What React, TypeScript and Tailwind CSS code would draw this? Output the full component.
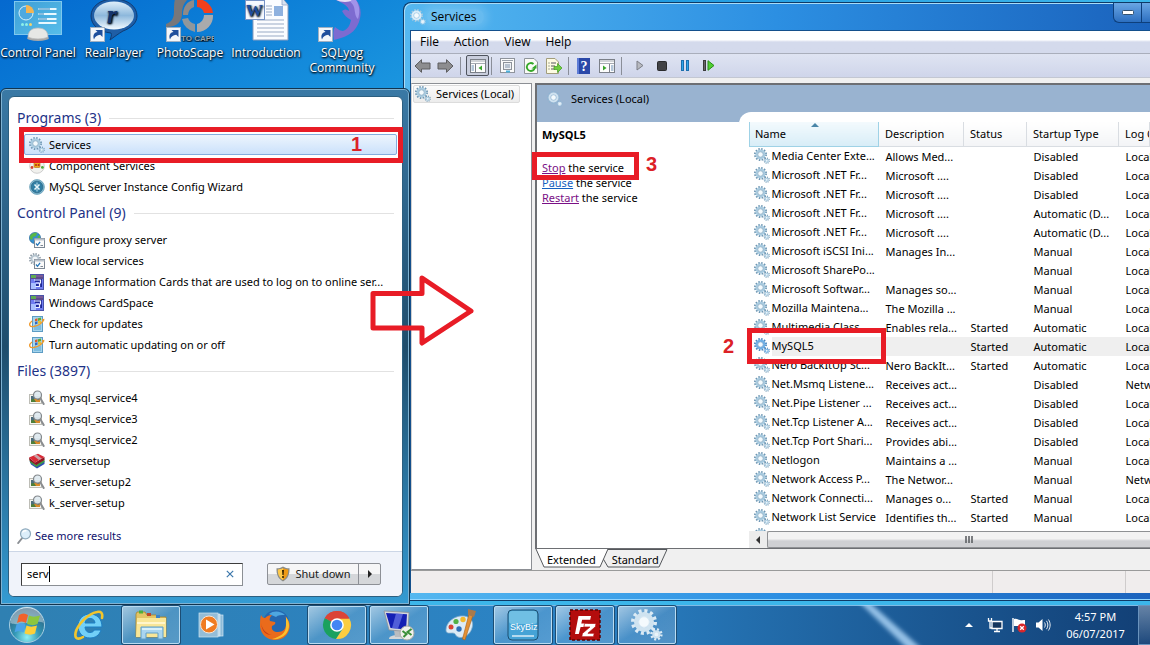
import type { ReactNode } from "react";

/* ---------- small icons ---------- */

type GearProps = { className?: string; body?: string; rim?: string };

function Gears({ className = "size-4", body = "#a9cbe0", rim = "#6f97b3" }: GearProps) {
  return (
    <svg viewBox="0 0 16 16" className={`${className} shrink-0`} aria-hidden="true">
      <circle cx="6.5" cy="6.5" r="5.5" fill="none" stroke={rim} strokeWidth="2" strokeDasharray="1.5 1.38" />
      <circle cx="6.5" cy="6.5" r="3.9" fill="none" stroke={body} strokeWidth="2.200" />
      <circle cx="6.5" cy="6.5" r="2.7" fill="#f4fafd" stroke={rim} strokeWidth="0.600" />
      <circle cx="12.7" cy="12.7" r="2.5" fill="none" stroke={rim} strokeWidth="1.200" strokeDasharray="1 0.96" />
      <circle cx="12.7" cy="12.7" r="1.5" fill="#eaf4fa" stroke={body} strokeWidth="1.100" />
    </svg>
  );
}

function ComponentIcon() {
  return (
    <svg viewBox="0 0 16 16" className="size-4 shrink-0" aria-hidden="true">
      <circle cx="8" cy="8" r="7.3" fill="#f1f1ee" stroke="#c4c4c4" strokeWidth="0.8" />
      <rect x="5" y="4.5" width="6" height="5" rx="1" fill="#f0a818" stroke="#b06a10" strokeWidth="0.6" />
      <circle cx="7" cy="7" r="1" fill="#b52318" />
      <circle cx="9.6" cy="7" r="1" fill="#b52318" />
      <circle cx="3" cy="9.5" r="1.4" fill="#d6402c" />
      <circle cx="13.4" cy="9.4" r="1.4" fill="#4ca83a" />
    </svg>
  );
}

function WizardIcon() {
  return (
    <svg viewBox="0 0 16 16" className="size-4 shrink-0" aria-hidden="true">
      <circle cx="8" cy="8" r="7.4" fill="#7fb6cf" stroke="#6a9fb8" strokeWidth="0.8" />
      <circle cx="8" cy="8" r="5.8" fill="#2f7da3" stroke="#2b6684" strokeWidth="0.7" />
      <path d="M5.5 5.500l5 5M10.500 5.500l-5 5" stroke="#e6f5fb" strokeWidth="1.600" />
      <path d="M8 3.500v3M8 9.500v3" stroke="#bfe2ef" strokeWidth="1" />
    </svg>
  );
}

function ChecklistOverlay() {
  return (
    <>
      <rect x="5.5" y="6.5" width="10" height="9" fill="#fafafa" stroke="#7c8794" />
      <rect x="5.5" y="6.5" width="10" height="2" fill="#b9c2cc" />
      <path d="M7 11.5l1.5 1.8 2.6-3.4" fill="none" stroke="#2475b8" strokeWidth="1.3" />
      <path d="M11.5 13.5h2.5" stroke="#7c8794" />
    </>
  );
}

function ProxyIcon() {
  return (
    <svg viewBox="0 0 16 16" className="size-4 shrink-0" aria-hidden="true">
      <circle cx="6" cy="6" r="5.6" fill="#3490cf" stroke="#1c5f94" strokeWidth="0.6" />
      <path d="M1 4c2-3 5-3.500 7-3l-1 3-3 1-1 3-2-1zM8 5l3-2v4z" fill="#58b847" />
      <ChecklistOverlay />
    </svg>
  );
}

function LocalServicesIcon() {
  return (
    <svg viewBox="0 0 16 16" className="size-4 shrink-0" aria-hidden="true">
      <circle cx="6" cy="6" r="5" fill="none" stroke="#8f9ba6" strokeWidth="2" strokeDasharray="1.4 1.2" />
      <circle cx="6" cy="6" r="3.500" fill="#f2f6f9" stroke="#b5c4cf" strokeWidth="1.8" />
      <ChecklistOverlay />
    </svg>
  );
}

function CardIcon() {
  return (
    <svg viewBox="0 0 16 16" className="size-4 shrink-0" aria-hidden="true">
      <rect x="1.5" y="0.500" width="13" height="15" fill="#6f7cf0" stroke="#4a53a8" />
      <rect x="2" y="1" width="12" height="4" fill="#5d4c8c" />
      <rect x="2" y="1" width="5" height="3" fill="#5faa54" />
      <rect x="7" y="1" width="7" height="2" fill="#7a5a98" />
      <rect x="2" y="9" width="5" height="6" fill="#a9c0ff" />
      <path d="M6 6.500h5.500v5H7" fill="none" stroke="#1d2899" strokeWidth="3" />
      <path d="M5 6h6.500v3H7M10.500 9.500v3H6.500" fill="none" stroke="#eef0ff" strokeWidth="1.200" />
    </svg>
  );
}

function UpdateIcon() {
  return (
    <svg viewBox="0 0 16 16" className="size-4 shrink-0" aria-hidden="true">
      <rect x="3.500" y="0.500" width="10" height="15" fill="#a6d4ec" stroke="#5d9cc4" />
      <rect x="5" y="9" width="7" height="5" fill="#7dbde0" />
      <path d="M6 3l2.500-.8v2.500L6 5.500z" fill="#dd5a2a" />
      <path d="M9 2.200l3-.6v2.500l-3 .8z" fill="#5aad3c" />
      <path d="M6 6l2.500-.7v2.500L6 8.400z" fill="#3068c0" />
      <path d="M9 5.300l3-.7v2.500l-3 .6z" fill="#e8c22e" />
      <path d="M3 5C-.8 8 .3 11.500 5 10.500c4-.8 8-3.500 9.500-6.500" fill="none" stroke="#f09a2c" strokeWidth="1.300" />
      <path d="M12.500 3.300l3-.6-.6 3z" fill="#f09a2c" />
    </svg>
  );
}

function PictureFileIcon() {
  return (
    <svg viewBox="0 0 16 16" className="size-4 shrink-0" aria-hidden="true">
      <rect x="0.500" y="4.500" width="12" height="9" fill="#f6f4ee" stroke="#bdbdb6" />
      <rect x="2" y="6" width="9" height="6" fill="#4c6d7d" />
      <path d="M5 12v-3l2-1 2 2 2-1v3z" fill="#d98a2a" />
      <path d="M2 12v-2.500l3-.5 2 3z" fill="#4e7f38" />
      <circle cx="8.500" cy="5" r="4" fill="#dfeaf0" fillOpacity="0.950" stroke="#83888c" strokeWidth="1.200" />
      <path d="M11.500 8.500l3.200 5.500" stroke="#8a8d90" strokeWidth="2" strokeLinecap="round" />
    </svg>
  );
}

function ArchiveIcon() {
  return (
    <svg viewBox="0 0 16 16" className="size-4 shrink-0" aria-hidden="true">
      <path d="M.5 8l6 5 9-5v3L8 15.500 2 11.500z" fill="#2f4fb5" />
      <path d="M.5 6l6 5.500 9-5v2.500L7.500 14 1 9.500z" fill="#3c9a48" />
      <path d="M0 4.500L6 9.500 15.500 4v3L7 12 .5 7.500z" fill="#8e1522" />
      <path d="M0 4.500L9 .8l6.500 3.200L6 9.500z" fill="#d92b37" />
      <path d="M4.500 2.700l5.500 4.300 2.500-1.400L7.500 1.500z" fill="#c9a3a8" />
    </svg>
  );
}

function SearchIcon() {
  return (
    <svg viewBox="0 0 16 16" className="size-4 shrink-0" aria-hidden="true">
      <path d="M1.200 15l4-5" stroke="#8b8f94" strokeWidth="2" strokeLinecap="round" />
      <circle cx="8.500" cy="5.800" r="5" fill="#dceefa" stroke="#8ea9bc" strokeWidth="1.200" />
      <path d="M5.500 4.500c.8-1.500 2.500-2 4-1.600" fill="none" stroke="#fff" strokeWidth="1.300" />
    </svg>
  );
}

function ShieldIcon() {
  return (
    <svg viewBox="0 0 16 16" className="size-4 shrink-0" aria-hidden="true">
      <path d="M8 .5c2 1.400 4 1.800 6.500 1.800.3 6-1.500 10.500-6.500 13.200C3 12.800 1.200 8.300 1.500 2.300 4 2.300 6 1.900 8 .5z" fill="#8c8c86" />
      <path d="M8 2c1.600 1 3.300 1.300 5.200 1.400.1 5-1.400 8.300-5.200 10.600z" fill="#ee9a16" />
      <path d="M8 2C6.400 3 4.700 3.300 2.800 3.400c-.1 5 1.400 8.300 5.200 10.600z" fill="#ffc94a" />
      <path d="M7 4h2l-.4 5H7.400z" fill="#3a2600" />
      <circle cx="8" cy="11" r="1.100" fill="#3a2600" />
    </svg>
  );
}

/* ---------- desktop shortcuts ---------- */

function ShortcutBadge() {
  return (
    <>
      <rect x="0.500" y="27.500" width="14" height="14" fill="#f3f6fa" stroke="#9fb0c2" />
      <path d="M4 39.500c-1.500-4 0-7 3.500-7.500L5.500 30h7v7l-2.300-2.300C7 35 5 36.500 4 39.500z" fill="#1f4f9c" />
    </>
  );
}

function ControlPanelArt() {
  return (
    <svg viewBox="0 0 48 42" className="h-[42px] w-12" aria-hidden="true">
      <defs>
        <linearGradient id="cp" x1="0" y1="0" x2="1" y2="1">
          <stop offset="0" stopColor="#3f9fd6" />
          <stop offset="1" stopColor="#56bdea" />
        </linearGradient>
      </defs>
      <rect x="0.500" y="1.500" width="47" height="33" fill="url(#cp)" stroke="#7fc8ee" />
      <circle cx="12" cy="13" r="7" fill="#4fa9e0" stroke="#d9f0fb" strokeWidth="1" />
      <path d="M12 13V5a8 8 0 0 1 8 8z" fill="#f4b553" />
      <path d="M24.500 9h18M24.500 14h18M24.500 19h18M24.500 23h18" stroke="#e8f8ff" strokeWidth="2" />
      <path d="M25 9h11M25 14h5M25 19h8" stroke="#2b82bd" strokeWidth="1" />
      <circle cx="8.500" cy="24.500" r="1.500" fill="#8df0e8" />
      <circle cx="12.500" cy="24.500" r="1.500" fill="#8df0e8" />
      <circle cx="16.500" cy="24.500" r="1.500" fill="#f5d36a" />
      <ellipse cx="24" cy="38" rx="11" ry="3" fill="#a8a8a8" />
      <path d="M14 37c0-6 4-9 10-9s10 3 10 9c-5 2.500-15 2.500-20 0z" fill="#e7e7e5" stroke="#b9b9b9" strokeWidth="0.700" />
    </svg>
  );
}

function RealPlayerArt() {
  return (
    <svg viewBox="0 0 48 42" className="h-[42px] w-12" aria-hidden="true">
      <defs>
        <linearGradient id="rp" x1="0" y1="0" x2="0" y2="1">
          <stop offset="0" stopColor="#dfeffa" />
          <stop offset="0.500" stopColor="#8db8dc" />
          <stop offset="1" stopColor="#f4fbff" />
        </linearGradient>
      </defs>
      <path d="M24-1C37-1 47 6 47 16c0 7-6 12-14 15-5 3-9 6-13 9 1-3 2-5 1-7C9 32 1 25 1 16 1 6 11-1 24-1z" fill="#1f5ea6" stroke="#103c74" strokeWidth="1" />
      <ellipse cx="24" cy="15.500" rx="20" ry="14" fill="url(#rp)" />
      <text x="17" y="23" fontFamily="Liberation Serif, serif" fontWeight="700" fontStyle="italic" fontSize="26" fill="#14346c">r</text>
      <ShortcutBadge />
    </svg>
  );
}

function PhotoScapeArt() {
  return (
    <svg viewBox="0 0 48 42" className="h-[42px] w-12" aria-hidden="true">
      <path d="M9-1h13c-4 4-6 8-6 14 0 8-4 14-16 14v-3c5-2 8-5 8-12 0-5 0-9 1-13z" fill="#77777a" />
      <path d="M31-1a16 16 0 0 1 16 14H38a8 8 0 0 0-7-6z" fill="#f3401c" />
      <path d="M47 15a16 16 0 0 1-16 17v-8a9 9 0 0 0 7-9z" fill="#a9aaac" />
      <path d="M29 32a16 16 0 0 1-13-13l6-1a9 9 0 0 0 7 6z" fill="#8f979c" />
      <path d="M28 0v7a9 9 0 0 0-6 8h-5C17 7 21 1 28 0z" fill="#8f8a88" />
      <text x="15" y="41" fontFamily="Liberation Sans, sans-serif" fontSize="8" fontWeight="700" fill="#93a3b0">TO CAPE</text>
      <ShortcutBadge />
    </svg>
  );
}

function WordDocArt() {
  return (
    <svg viewBox="0 0 48 42" className="h-[42px] w-12" aria-hidden="true">
      <path d="M11-1h30l5 6v35H11z" fill="#fbfcff" stroke="#8a9cbd" />
      <path d="M40-1v6h6" fill="#d9e2f1" stroke="#8a9cbd" strokeWidth="0.700" />
      <path d="M24 6h6M24 9h6M24 12h6M24 15h6M15 20h27M15 24h27M15 28h27M15 32h27M15 36h27" stroke="#9aaac6" strokeWidth="1.200" />
      <rect x="32" y="6" width="9" height="10" fill="#8fb1df" />
      <rect x="3.500" y="0.500" width="19" height="19" fill="#f6f9ff" stroke="#7793c6" />
      <text x="4" y="16" fontFamily="Liberation Serif, serif" fontSize="17" fontWeight="700" fill="#1f4d9e">W</text>
    </svg>
  );
}

function SqlyogArt() {
  return (
    <svg viewBox="0 0 48 42" className="h-[42px] w-12" aria-hidden="true">
      <path d="M16-1h21c6 6 7 14 4 23-3 8-8 12-15 15-3 1-6 2-10 3-1-6-1-9 1-13 4 3 6 4 8 4 5-2 7-6 8-11-4-2-7-5-9-9 2-2 4-2 7 0 0-5-7-8-15-12z" fill="#7d6bd0" />
      <path d="M31 0h7c4 6 4 13 2 19-3-2-3-8-4-12-1-3-3-4-5-7z" fill="#a293ea" />
      <path d="M17-1h17c0 2-3 3-7 3s-8-1-10-3z" fill="#e8dff5" />
      <ShortcutBadge />
    </svg>
  );
}

const shortcuts: { label: string; art: ReactNode }[] = [
  { label: "Control Panel", art: <ControlPanelArt /> },
  { label: "RealPlayer", art: <RealPlayerArt /> },
  { label: "PhotoScape", art: <PhotoScapeArt /> },
  { label: "Introduction", art: <WordDocArt /> },
  { label: "SQLyog Community", art: <SqlyogArt /> },
];

function Desktop() {
  return (
    <div className="flex items-start text-[12px] [font-family:'Open_Sans','Noto_Sans',sans-serif]">
      {shortcuts.map((s) => (
        <a
          key={s.label}
          href="#"
          className="flex w-[76px] flex-col items-center gap-[3px] text-center leading-[15px] text-white [text-shadow:0_1px_2px_#000,1px_1px_2px_#001a33]"
        >
          {s.art}
          <span>{s.label}</span>
        </a>
      ))}
    </div>
  );
}

/* ---------- start menu ---------- */

const groups: { title: string; items: { label: string; icon: ReactNode; active?: boolean }[] }[] = [
  {
    title: "Programs (3)",
    items: [
      { label: "Services", icon: <Gears />, active: true },
      { label: "Component Services", icon: <ComponentIcon /> },
      { label: "MySQL Server Instance Config Wizard", icon: <WizardIcon /> },
    ],
  },
  {
    title: "Control Panel (9)",
    items: [
      { label: "Configure proxy server", icon: <ProxyIcon /> },
      { label: "View local services", icon: <LocalServicesIcon /> },
      { label: "Manage Information Cards that are used to log on to online ser...", icon: <CardIcon /> },
      { label: "Windows CardSpace", icon: <CardIcon /> },
      { label: "Check for updates", icon: <UpdateIcon /> },
      { label: "Turn automatic updating on or off", icon: <UpdateIcon /> },
    ],
  },
  {
    title: "Files (3897)",
    items: [
      { label: "k_mysql_service4", icon: <PictureFileIcon /> },
      { label: "k_mysql_service3", icon: <PictureFileIcon /> },
      { label: "k_mysql_service2", icon: <PictureFileIcon /> },
      { label: "serversetup", icon: <ArchiveIcon /> },
      { label: "k_server-setup2", icon: <PictureFileIcon /> },
      { label: "k_server-setup", icon: <PictureFileIcon /> },
    ],
  },
];

function StartMenu() {
  return (
    <section
      aria-label="Start menu"
      className="absolute top-[88px] bottom-0 left-0 flex w-[410px] flex-col rounded-t-md border border-[#12344e] bg-linear-to-b from-[#3a79a5] via-[#1f4d6c] to-[#349bd3] py-[7px] pr-[6px] pl-[7px] shadow-[inset_0_0_0_1px_#7fb2d2]"
    >
      <div className="flex flex-1 flex-col overflow-hidden rounded-md border border-[#2c5f80] bg-white">
        <div className="flex-1 px-2 pt-[5px]">
          {groups.map((g) => (
            <div key={g.title}>
              <h2 className="flex h-8 items-center gap-2 text-[14px] whitespace-nowrap text-[#1e3287]">
                {g.title}
                <span className="h-px flex-1 bg-[#e2e2e2]" />
              </h2>
              <ul className="-mr-[3px] pl-[7px]">
                {g.items.map((it) => (
                  <li key={it.label}>
                    <button
                      type="button"
                      className={
                        it.active
                          ? "flex h-[21px] w-full items-center gap-1 rounded-xs border border-[#84acdd] bg-linear-to-b from-[#edf5fd] to-[#cbe1fb] pl-1 whitespace-nowrap"
                          : "flex h-[21px] w-full items-center gap-1 border border-transparent pl-1 whitespace-nowrap"
                      }
                    >
                      {it.icon}
                      {it.label}
                    </button>
                  </li>
                ))}
              </ul>
            </div>
          ))}
          <a href="#" className="mt-[13px] flex h-5 items-center gap-[2px] text-[#10126e]">
            <SearchIcon />
            See more results
          </a>
        </div>
        <div className="flex h-[45px] items-center justify-between border-t border-[#ccd6e6] bg-[#f0f3fa] pr-[21px] pl-3">
          <label className="flex h-[23px] w-[222px] items-center border border-[#8b8f94] border-t-[#3c3c3c] border-l-[#3c3c3c] bg-white px-[5px]">
            <span className="sr-only">Search programs and files</span>
            <span className="flex min-w-0 flex-1 items-center">
              <input type="text" defaultValue="serv" className="w-[23px] min-w-0 border-r border-black outline-none" />
            </span>
            <svg viewBox="0 0 8 8" className="mr-[3px] size-2" aria-hidden="true">
              <path d="M.8.8l6.400 6.400M7.200.8L.8 7.200" stroke="#3c78ac" strokeWidth="1.200" />
            </svg>
          </label>
          <div className="flex h-[22px] rounded-xs border border-[#8d9096] bg-linear-to-b from-[#f6f6f7] from-50% to-[#d5d7da] to-50% text-[#1a1a1a]">
            <button type="button" className="flex w-[91px] items-center justify-center gap-1 border-r border-[#8d9096] whitespace-nowrap">
              <ShieldIcon />
              Shut down
            </button>
            <button type="button" aria-label="Shutdown options" className="flex w-[21px] items-center justify-center">
              <svg viewBox="0 0 4 8" className="h-2 w-1" aria-hidden="true">
                <path d="M0 0l4 4-4 4z" fill="#222" />
              </svg>
            </button>
          </div>
        </div>
      </div>
    </section>
  );
}

/* ---------- services window ---------- */

function ToolSep() {
  return <span className="h-[18px] w-px bg-[#8a8e98]" />;
}

function PaneIcon({ flip = false }: { flip?: boolean }) {
  return (
    <svg viewBox="0 0 16 14" className="h-[14px] w-4" aria-hidden="true">
      <rect x="0.500" y="0.500" width="15" height="13" fill="#fdfdfd" stroke="#7b8088" />
      <path d="M1 2h14M1 4.500h14" stroke="#a6abb3" strokeWidth="1.200" />
      <path d={flip ? "M10.500 5v8" : "M5.500 5v8"} stroke="#7b8088" />
      <path d={flip ? "M12 7h2.500M12 9h2.500M12 11h2.500" : "M1.500 7H4M1.500 9H4M1.500 11H4"} stroke="#6a8fb5" />
      <path d={flip ? "M4 6.500v5l3.500-2.500z" : "M12 6.500v5L8.500 9z"} fill="#39a52c" />
    </svg>
  );
}

function ArrowTool({ right = false }: { right?: boolean }) {
  return (
    <svg viewBox="0 0 17 14" className="h-[14px] w-[17px]" aria-hidden="true">
      <path
        d={right ? "M16 7L9.500 .7v3.300H1v6h8.500v3.300z" : "M1 7L7.500.7V4H16v6H7.500v3.300z"}
        fill="#8d8d8f"
        stroke="#5c5c5e"
        strokeWidth="1"
      />
    </svg>
  );
}

function Toolbar() {
  return (
    <div className="flex h-6 items-center border-b border-[#c3c7d2] bg-linear-to-b from-[#dfe4f2] to-[#cfd5ea] pl-[3px]">
      <div className="flex items-center gap-[6px]">
        <button type="button" aria-label="Back"><ArrowTool /></button>
        <button type="button" aria-label="Forward"><ArrowTool right /></button>
        <ToolSep />
      </div>
      <button type="button" aria-label="Show console tree" className="ml-[5px] flex h-[21px] w-[23px] items-center justify-center rounded-xs border border-[#4f545e] bg-[#c9cedd]">
        <PaneIcon />
      </button>
      <div className="ml-[2px] flex items-center gap-2">
        <ToolSep />
        <button type="button" aria-label="Properties">
          <svg viewBox="0 0 15 16" className="h-4 w-[15px]" aria-hidden="true">
            <rect x="0.500" y="0.500" width="14" height="14" fill="#fbfbfb" stroke="#8e939b" />
            <path d="M2 2.500h11" stroke="#9ba1aa" />
            <rect x="3.500" y="4.500" width="8" height="7" fill="#eef1f5" stroke="#8e939b" />
            <path d="M5 7h5M5 9h5" stroke="#8093aa" />
            <path d="M6 13.500h4" stroke="#4cb0dc" strokeWidth="2" />
          </svg>
        </button>
        <button type="button" aria-label="Refresh" className="ml-px">
          <svg viewBox="0 0 14 16" className="h-4 w-[14px]" aria-hidden="true">
            <path d="M.5.5H10l3.500 3.500v11.500H.5z" fill="#fbfbf6" stroke="#8f959b" />
            <path d="M10.800 9.500A4 4 0 1 1 9.500 6" fill="none" stroke="#35a82a" strokeWidth="1.800" />
            <path d="M7.500 10.500h5v-4z" fill="#35a82a" />
          </svg>
        </button>
        <button type="button" aria-label="Export list">
          <svg viewBox="0 0 16 16" className="size-4" aria-hidden="true">
            <path d="M.5.5H9L12.500 4v11.500H.5z" fill="#fdfbe2" stroke="#a29d7c" />
            <path d="M2.500 5h1M5 5h5M2.500 8h1M5 8h4M2.500 11h1M5 11h4" stroke="#55585c" strokeWidth="1.200" />
            <path d="M8 8.500h3.500V5.500L16 10l-4.500 4.500v-3H8z" fill="#6fce3e" stroke="#3f9a20" strokeWidth="0.700" />
          </svg>
        </button>
      </div>
      <div className="ml-[6px] flex items-center gap-2">
        <ToolSep />
        <button type="button" aria-label="Help">
          <svg viewBox="0 0 13 16" className="h-4 w-[13px]" aria-hidden="true">
            <rect width="13" height="16" fill="#2a48a8" />
            <path d="M0 0h2v16H0z" fill="#5d7bd6" />
            <text x="3.500" y="13" fontFamily="Liberation Serif, serif" fontWeight="700" fontSize="14" fill="#fff">?</text>
          </svg>
        </button>
        <button type="button" aria-label="Show action pane" className="ml-px"><PaneIcon flip /></button>
      </div>
      <div className="ml-[6px] flex items-center">
        <ToolSep />
        <button type="button" aria-label="Start service" className="ml-[14px]">
          <svg viewBox="0 0 8 11" className="h-[11px] w-2" aria-hidden="true">
            <path d="M1 1l6 4.500L1 10z" fill="#b8bac0" stroke="#7c7f86" />
          </svg>
        </button>
        <button type="button" aria-label="Stop service" className="ml-[13px]">
          <svg viewBox="0 0 10 10" className="size-[10px]" aria-hidden="true">
            <rect x="0.500" y="0.500" width="9" height="9" rx="1" fill="#414245" stroke="#2a2b2d" />
          </svg>
        </button>
        <button type="button" aria-label="Pause service" className="ml-[14px]">
          <svg viewBox="0 0 8 11" className="h-[11px] w-2" aria-hidden="true">
            <rect x="0.500" y="0.500" width="2" height="10" fill="#2fa5e8" stroke="#1b6fae" />
            <rect x="5.500" y="0.500" width="2" height="10" fill="#2fa5e8" stroke="#1b6fae" />
          </svg>
        </button>
        <button type="button" aria-label="Restart service" className="ml-[14px]">
          <svg viewBox="0 0 12 11" className="h-[11px] w-3" aria-hidden="true">
            <rect x="0.500" y="0.500" width="2" height="10" fill="#666" stroke="#3b3b3b" />
            <path d="M5 .7l6 4.800-6 4.800z" fill="#4fd030" stroke="#288b18" />
          </svg>
        </button>
      </div>
    </div>
  );
}

const services: [string, string, string, string, string][] = [
  ["Media Center Exte...", "Allows Med...", "", "Disabled", "Local Service"],
  ["Microsoft .NET Fr...", "Microsoft ....", "", "Disabled", "Local System"],
  ["Microsoft .NET Fr...", "Microsoft ....", "", "Disabled", "Local System"],
  ["Microsoft .NET Fr...", "Microsoft ....", "", "Automatic (D...", "Local System"],
  ["Microsoft .NET Fr...", "Microsoft ....", "", "Automatic (D...", "Local System"],
  ["Microsoft iSCSI Ini...", "Manages In...", "", "Manual", "Local System"],
  ["Microsoft SharePo...", "", "", "Manual", "Local System"],
  ["Microsoft Softwar...", "Manages so...", "", "Manual", "Local System"],
  ["Mozilla Maintena...", "The Mozilla ...", "", "Manual", "Local System"],
  ["Multimedia Class ...", "Enables rela...", "Started", "Automatic", "Local System"],
  ["MySQL5", "", "Started", "Automatic", "Local System"],
  ["Nero BackItUp Sc...", "Nero BackIt...", "Started", "Automatic", "Local System"],
  ["Net.Msmq Listene...", "Receives act...", "", "Disabled", "Network Service"],
  ["Net.Pipe Listener ...", "Receives act...", "", "Disabled", "Local Service"],
  ["Net.Tcp Listener A...", "Receives act...", "", "Disabled", "Local Service"],
  ["Net.Tcp Port Shari...", "Provides abi...", "", "Disabled", "Local Service"],
  ["Netlogon", "Maintains a ...", "", "Manual", "Local System"],
  ["Network Access P...", "The Networ...", "", "Manual", "Network Service"],
  ["Network Connecti...", "Manages o...", "Started", "Manual", "Local System"],
  ["Network List Service", "Identifies th...", "Started", "Manual", "Local Service"],
  ["Network Location ...", "Collects an...", "Started", "Automatic", "Network Service"],
];

function ServiceTable() {
  return (
    <table className="w-full table-fixed border-collapse text-left whitespace-nowrap">
      <colgroup>
        <col className="w-[129px]" />
        <col className="w-[85px]" />
        <col className="w-[63px]" />
        <col className="w-[92px]" />
        <col />
      </colgroup>
      <thead>
        <tr className="h-6">
          <th className="relative border-x border-b border-[#9fd2e6] bg-linear-to-b from-[#f3fafd] to-[#d8edf7] pl-[5px] font-normal">
            <svg viewBox="0 0 8 4" className="absolute top-px left-[61px] h-1 w-2" aria-hidden="true">
              <path d="M0 4l4-4 4 4z" fill="#4a86a8" />
            </svg>
            Name
          </th>
          {["Description", "Status", "Startup Type", "Log On As"].map((h) => (
            <th key={h} className="overflow-hidden border-r border-b border-[#d9dde2] bg-linear-to-b from-white to-[#f3f4f6] pl-[6px] font-normal">
              {h}
            </th>
          ))}
        </tr>
      </thead>
      <tbody>
        {services.map((row, i) => {
          const selected = row[0] === "MySQL5";
          return (
            <tr key={i} className={selected ? "h-[19px] bg-[#efefef]" : "h-[19px]"}>
              {row.map((cell, c) =>
                c === 0 ? (
                  <td key={c} className="overflow-hidden p-0">
                    <div className="flex h-[19px] items-center">
                      <span className="flex h-full w-[22px] shrink-0 items-center bg-white pl-1">
                        <Gears body={selected ? "#6fb0e6" : "#a9cbe0"} rim={selected ? "#4c86bd" : "#6f97b3"} />
                      </span>
                      {cell}
                    </div>
                  </td>
                ) : (
                  <td key={c} className="overflow-hidden py-0 pr-0 pl-[7px] leading-[19px]">{cell}</td>
                ),
              )}
            </tr>
          );
        })}
      </tbody>
    </table>
  );
}

function ServicesWindow() {
  return (
    <section
      aria-label="Services window"
      className="absolute top-[2px] right-0 bottom-1 left-[403px] flex flex-col rounded-tl-lg border border-r-0 border-[#0e3a66] bg-linear-to-r from-[#55b8f0] via-[#2c8fe2] to-[#1b63bd] pb-[7px] pl-[6px] shadow-[inset_1px_1px_0_#a8dcf8,inset_0_-1px_0_#8fd4ff]"
    >
      <header className="flex h-[27px] items-center justify-between text-[12px] [font-family:'Open_Sans','Noto_Sans',sans-serif]">
        <h1 className="flex items-center gap-px">
          <Gears body="#d9ecf8" rim="#a3c8e0" />
          <span className="rounded-full bg-white/15 pr-2 pl-1 shadow-[0_0_8px_4px_rgba(255,255,255,0.15)]">Services</span>
        </h1>
        <div className="flex h-5 self-start rounded-bl-md border border-t-0 border-r-0 border-[#0d3f7c] bg-linear-to-b from-[#6aa6e4] to-[#2c6fc0] text-white">
          <button type="button" aria-label="Minimize" className="flex w-7 items-center justify-center border-r border-[#0d3f7c]">
            <svg viewBox="0 0 12 5" className="h-[5px] w-3" aria-hidden="true">
              <rect x="0.500" y="0.500" width="11" height="4" rx="1" fill="#fff" stroke="#33516f" />
            </svg>
          </button>
          <button type="button" aria-label="Maximize" className="w-2" />
        </div>
      </header>

      <div className="flex min-h-0 flex-1 flex-col border-t border-l border-[#14508c] bg-[#f0f0f0]">
        <nav className="flex h-[23px] items-center border-b border-[#a9aebb] bg-linear-to-b from-white from-40% to-[#d4daec] to-50% pl-[9px] text-[12px] [font-family:'Open_Sans','Noto_Sans',sans-serif]">
          <div className="flex gap-[15px]">
            {["File", "Action", "View", "Help"].map((m) => (
              <button key={m} type="button">{m}</button>
            ))}
          </div>
        </nav>
        <Toolbar />

        <div className="mt-[5px] flex min-h-0 flex-1">
          <aside className="w-[121px] shrink-0 border border-[#8c8f94] border-l-[#d0d0d0] bg-white p-px">
            <a href="#" className="flex h-[18px] w-[107px] items-center gap-[5px] rounded-xs border border-[#dcdcdc] bg-linear-to-b from-[#fbfbfb] to-[#ececec] pl-px whitespace-nowrap">
              <Gears />
              Services (Local)
            </a>
          </aside>

          <div className="ml-[3px] flex min-w-0 flex-1 flex-col">
            <div className="flex min-h-0 flex-1 flex-col border-t-2 border-b border-l-2 border-[#6d6f73] bg-[#99b3d0]">
              <div className="flex h-[27px] shrink-0 items-center gap-2 pl-[10px]">
                <Gears body="#cfe2f0" rim="#8fb4d2" />
                Services (Local)
              </div>
              <div className="flex min-h-0 flex-1">
                <div className="mt-[10px] w-[202px] shrink-0 bg-white px-[5px] pt-[5px] leading-[15px]">
                  <h2 className="font-bold">MySQL5</h2>
                  <ul className="mt-[18px]">
                    <li><a href="#" className="text-[#7a0f86] underline">Stop</a> the service</li>
                    <li><a href="#" className="text-[#1560c0] underline">Pause</a> the service</li>
                    <li><a href="#" className="text-[#7a0f86] underline">Restart</a> the service</li>
                  </ul>
                </div>
                <div className="flex min-w-0 flex-1 flex-col rounded-tl-xl bg-white pt-[10px] pl-[10px]">
                  <div className="min-h-0 flex-1 overflow-hidden">
                    <ServiceTable />
                  </div>
                  <div className="flex h-[17px] shrink-0 bg-[#ececec]">
                    <button type="button" aria-label="Scroll left" className="flex w-[18px] items-center justify-center">
                      <svg viewBox="0 0 4 8" className="h-2 w-1" aria-hidden="true">
                        <path d="M4 0L0 4l4 4z" fill="#333" />
                      </svg>
                    </button>
                    <button type="button" aria-label="Horizontal scroll thumb" className="flex flex-1 items-center justify-center rounded-l-xs border border-r-0 border-[#8f9194] bg-linear-to-b from-[#f3f3f3] from-45% to-[#cfd0d3] to-60% pl-5">
                      <svg viewBox="0 0 8 7" className="h-[7px] w-2" aria-hidden="true">
                        <path d="M1 0v7M4 0v7M7 0v7" stroke="#55585c" strokeWidth="1.500" />
                      </svg>
                    </button>
                  </div>
                </div>
              </div>
            </div>
            <div className="relative flex h-[21px] shrink-0 items-center">
              <svg viewBox="0 0 140 20" className="absolute top-0 left-0 h-5 w-[140px]" aria-hidden="true">
                <path d="M72 .5l-4 9 5 8.500h51l8-17.500z" fill="#f0f0f0" stroke="#55585c" />
                <path d="M1 0l8 18h56l8-18z" fill="#fff" />
                <path d="M1 0l8 18h56l8-18" fill="none" stroke="#55585c" />
              </svg>
              <div className="relative flex gap-4 pl-3">
                <button type="button">Extended</button>
                <button type="button">Standard</button>
              </div>
            </div>
          </div>
        </div>

        <footer className="flex h-[23px] shrink-0 border-t border-[#9a9a9a] bg-[#f0eded]">
          <span className="flex-1 border-r border-[#cfcccc]" />
          <span className="w-[133px] border-r border-[#cfcccc]" />
          <span className="w-6" />
        </footer>
      </div>
    </section>
  );
}

/* ---------- taskbar ---------- */

function StartOrb() {
  return (
    <svg viewBox="0 0 38 38" className="size-[38px]" aria-hidden="true">
      <defs>
        <radialGradient id="orb" cx="0.500" cy="0.850" r="0.800">
          <stop offset="0" stopColor="#8ef0f4" />
          <stop offset="0.450" stopColor="#3296b4" />
          <stop offset="1" stopColor="#2c5c7c" />
        </radialGradient>
      </defs>
      <circle cx="19" cy="19" r="17.500" fill="url(#orb)" stroke="#a8cfe2" strokeWidth="1" />
      <path d="M2.500 17A16.500 16.500 0 0 1 35.500 17C28 13 10 21 2.500 17z" fill="#fff" fillOpacity="0.400" />
      <path d="M11 9c3-2 6-2 9 0l-2 8c-3-2-6-2-9 0z" fill="#f0622d" />
      <path d="M21 9.500c3 1.500 6 1.500 11 0l-2.500 8.500c-3 1.500-6 1.500-10.500 0z" fill="#8cc63e" />
      <path d="M8.500 18.500c3-2 6-2 9 0l-2 8c-3-2-6-2-9 0z" fill="#4aa3e8" />
      <path d="M18.500 19.500c3 1.500 6 1.500 10.500 0l-2 8c-3 1.500-6 1.500-10.500 0z" fill="#fccf3a" />
    </svg>
  );
}

function IeIcon() {
  return (
    <svg viewBox="0 0 34 34" className="size-[34px]" aria-hidden="true">
      <path d="M30 19H13c.2 3.500 2 5.500 5 5.500 2 0 3.500-.8 4.300-2.500H29c-1.500 5-5.500 8-11 8C11 30 6 25 6 18S11 6 18 6s12 5 12 13zM23 15c-.3-3-2-4.500-5-4.500S13.500 12 13 15z" fill="#72d0f8" stroke="#1d7fc4" strokeWidth="1" fillRule="evenodd" />
      <path d="M30 10c1-5-1-7-5-6C16 5.500 5 17 3.500 25 2.500 31 6 32 11 29" fill="none" stroke="#f3c52c" strokeWidth="2.600" strokeLinecap="round" />
    </svg>
  );
}

function ExplorerIcon() {
  return (
    <svg viewBox="0 0 34 32" className="h-8 w-[34px]" aria-hidden="true">
      <path d="M3 3h8l2 3h9l2 2h8v20H2V5z" fill="#e3c566" stroke="#a98728" strokeWidth="0.800" />
      <rect x="5" y="1.500" width="4" height="3" fill="#4eae3c" />
      <rect x="13" y="4" width="4" height="3" fill="#c0452c" />
      <rect x="22" y="6" width="4" height="3" fill="#3c83c8" />
      <path d="M3 9h29v19H2z" fill="#f8e698" />
      <path d="M3 14h28" stroke="#fff6cc" strokeWidth="2" />
      <path d="M7 30V18h22v12h-5v-6H12v6z" fill="#a9d5ef" stroke="#5f9fc8" strokeWidth="1" />
      <path d="M8 20h20" stroke="#e8f8ff" strokeWidth="1.500" />
    </svg>
  );
}

function MediaIcon() {
  return (
    <svg viewBox="0 0 30 26" className="h-[26px] w-[30px]" aria-hidden="true">
      <rect x="8" y="3" width="17" height="21" fill="#b7d4e6" fillOpacity="0.700" stroke="#d5e9f5" strokeWidth="0.700" />
      <rect x="5" y="2" width="17" height="22" fill="#bcd8e9" stroke="#dcedf7" strokeWidth="0.700" />
      <rect x="1" y="1" width="19" height="24" fill="#93bdd8" stroke="#cfe4f0" strokeWidth="0.700" />
      <circle cx="11" cy="12.500" r="8.500" fill="#f07c22" stroke="#f8e6d6" strokeWidth="1" />
      <path d="M8 7.500l8.500 5L8 17.500z" fill="#fff" />
    </svg>
  );
}

function FirefoxIcon() {
  return (
    <svg viewBox="0 0 32 32" className="size-8" aria-hidden="true">
      <circle cx="17" cy="14" r="13" fill="#2467b0" />
      <path d="M10 5c5-4 12-3 16 1-4 0-7 0-9 2z" fill="#4ea6e0" />
      <path d="M2 6c1 2 2 3 4 3 2-2 4-3 7-3-2 2-3 4-2 6l5 1c1 1 0 3-3 4-1 4 2 6 6 6 5 0 8-3 8-8 2-2 0-6-1-8 4 4 6 9 4 14-2 7-8 10-14 10C8 31 2 25 1 18 1 13 1 9 2 6z" fill="#ea6b1c" />
      <path d="M27 8c4 5 4 12 0 17-4 4-9 6-14 5 8-2 14-6 14-13z" fill="#fbc02e" />
      <path d="M2 14c1 6 5 11 11 12-7 0-10-4-11-12z" fill="#c53b18" />
    </svg>
  );
}

function ChromeIcon() {
  return (
    <svg viewBox="0 0 32 32" className="size-[30px]" aria-hidden="true">
      <path d="M16 16L3 8.500a15 15 0 0 1 26 0z" fill="#db4437" />
      <path d="M16 16L3 8.500a15 15 0 0 0 12 22.400L22 19.500z" fill="#1aa15f" />
      <path d="M16 9h13.200A15 15 0 0 1 15 31l7.500-11.500z" fill="#fccd40" />
      <path d="M16 16L3 8.500 16 9h13.200a15 15 0 0 0-26-.7z" fill="#db4437" />
      <circle cx="16" cy="16" r="7.300" fill="#fff" />
      <circle cx="16" cy="16" r="5.700" fill="#4285f4" />
    </svg>
  );
}

function RemoteIcon() {
  return (
    <svg viewBox="0 0 32 32" className="size-8" aria-hidden="true">
      <path d="M6 30c0-3 4-4 10-4s9 1 9 4z" fill="#d4d6d8" />
      <path d="M11 21h8l1 7h-8z" fill="#b9bcc0" />
      <path d="M1 2l25 1.500-1 19L6 21z" fill="#d4d8de" stroke="#8b9097" strokeWidth="0.800" />
      <path d="M3 4l21 1.200-1 15.300L7.500 19z" fill="#1420b4" />
      <path d="M13 4.600l7 .4-5 14.700-6-.6z" fill="#6b79e8" fillOpacity="0.700" />
      <circle cx="24" cy="24" r="7" fill="#f0f1ec" stroke="#a9aca6" />
      <path d="M19.500 22l4 3-3 3M28.500 20l-4 3 4 3" fill="none" stroke="#3a8f38" strokeWidth="2" />
    </svg>
  );
}

function PaintIcon() {
  return (
    <svg viewBox="0 0 32 32" className="size-8" aria-hidden="true">
      <path d="M1 21C1 13 10 6 19 7c7 1 10 6 8 12-2 7-9 11-14 9-3-1-2-4-5-4s-7 1-7-3z" fill="#dcebf6" stroke="#8ab0cc" strokeWidth="0.800" />
      <circle cx="6" cy="18" r="2.500" fill="#d94334" />
      <circle cx="11" cy="12.500" r="2.600" fill="#52b044" />
      <circle cx="18" cy="10.500" r="2.700" fill="#f3ba2e" />
      <circle cx="14" cy="20" r="2.700" fill="#2e6fb8" />
      <path d="M28 6L20 31l-2.500-1L24 5z" fill="#e39035" stroke="#a85f18" strokeWidth="0.600" />
      <path d="M23 0l8 2-2 6-6-2z" fill="#a87a4c" />
    </svg>
  );
}

function SkyBizIcon() {
  return (
    <svg viewBox="0 0 32 32" className="size-8" aria-hidden="true">
      <rect x="1" y="1" width="30" height="30" rx="4" fill="#45a3d6" stroke="#1d4f70" strokeWidth="1" />
      <rect x="2" y="2" width="28" height="13" rx="3" fill="#70bfe4" />
      <text x="3" y="21" fontFamily="Liberation Sans, sans-serif" fontSize="9" fill="#fff">SkyBiz</text>
      <path d="M5 27h22" stroke="#fff" strokeWidth="1.200" />
    </svg>
  );
}

function FilezillaIcon() {
  return (
    <svg viewBox="0 0 32 32" className="size-8" aria-hidden="true">
      <rect x="1" y="1" width="30" height="30" fill="#b30d0d" stroke="#5a0505" strokeWidth="1.500" strokeDasharray="3 2" />
      <path d="M6 25L9.500 7H22l-.8 3.700h-8.100l-.8 3.800h6.500l-.7 3.500h-6.500L9.800 25z" fill="#fff" />
      <path d="M15.500 14.500H27l-.6 3.200-7.500 6.600h6.300l-.7 3.400H12.800l.6-3.200 7.500-6.500h-6z" fill="#fff" stroke="#b30d0d" strokeWidth="0.700" />
    </svg>
  );
}

type Task = { label: string; icon: ReactNode; open?: boolean };

const tasks: Task[] = [
  { label: "Internet Explorer", icon: <IeIcon /> },
  { label: "Windows Explorer", icon: <ExplorerIcon />, open: true },
  { label: "Media Player", icon: <MediaIcon /> },
  { label: "Firefox", icon: <FirefoxIcon /> },
  { label: "Chrome", icon: <ChromeIcon />, open: true },
  { label: "Remote Desktop", icon: <RemoteIcon />, open: true },
  { label: "Paint", icon: <PaintIcon /> },
  { label: "SkyBiz", icon: <SkyBizIcon />, open: true },
  { label: "FileZilla", icon: <FilezillaIcon />, open: true },
  { label: "Services", icon: <Gears className="size-8" body="#cfe3f0" rim="#dcebf5" />, open: true },
];

function Taskbar() {
  return (
    <footer className="flex h-10 shrink-0 items-center bg-linear-to-r from-[#2f80b2] via-[#2b83c6] via-50% to-[#123f75] shadow-[inset_0_1px_0_#7fbbe4,0_-1px_0_#14406b]">
      <button type="button" aria-label="Start" className="ml-2 flex w-[52px] shrink-0">
        <StartOrb />
      </button>
      <div className="flex shrink-0 gap-1">
        {tasks.map((t) => (
          <button
            key={t.label}
            type="button"
            aria-label={t.label}
            className={
              t.open
                ? "flex h-[38px] w-[58px] items-center justify-center rounded-xs border border-[#b9dcf2] bg-linear-to-br from-white/55 via-white/15 to-white/20 shadow-[0_0_0_1px_#1c4d74]"
                : "flex h-[38px] w-[58px] items-center justify-center"
            }
          >
            {t.icon}
          </button>
        ))}
      </div>
      <svg viewBox="0 0 120 40" className="ml-[162px] h-10 w-[120px] shrink" aria-hidden="true">
        <defs>
          <filter id="soft">
            <feGaussianBlur stdDeviation="2" />
          </filter>
        </defs>
        <path d="M20-4L30-4 84 44H70z" fill="#a9d2f5" fillOpacity="0.850" filter="url(#soft)" />
      </svg>
      <div className="ml-auto flex h-full items-center text-white">
        <button type="button" aria-label="Show hidden icons" className="mr-[14px]">
          <svg viewBox="0 0 8 4" className="h-1 w-2" aria-hidden="true"><path d="M0 4l4-4 4 4z" fill="#fff" /></svg>
        </button>
        <div className="flex items-center gap-2">
          <svg viewBox="0 0 16 16" className="size-4" aria-label="Network">
            <path d="M5 4.500h10v7H5zM7 14.500h6M10 12v2.500" fill="#14365e" stroke="#fff" strokeWidth="1.300" />
            <path d="M1.500 1v3h3V1M3 4v7h2" fill="none" stroke="#fff" strokeWidth="1.300" />
          </svg>
          <svg viewBox="0 0 16 16" className="size-4" aria-label="Action Center">
            <path d="M2 1v14" stroke="#fff" strokeWidth="1.400" />
            <path d="M3 2c3-1 4 1 6 1 2 .5 3 0 5 0v6H3z" fill="#fff" />
            <circle cx="11" cy="11" r="4.500" fill="#d8262a" />
            <path d="M9.200 9.200l3.600 3.600M12.800 9.200l-3.600 3.600" stroke="#fff" strokeWidth="1.300" />
          </svg>
          <svg viewBox="0 0 16 16" className="size-4" aria-label="Volume">
            <path d="M1 5.500h2.500L7.500 2v12l-4-3.500H1z" fill="#fff" />
            <path d="M9.500 5.500c1 1.500 1 3.500 0 5M11.500 3.800c1.800 2.500 1.800 5.900 0 8.400M13.400 2.500c2.300 3.300 2.300 7.700 0 11" fill="none" stroke="#fff" strokeWidth="0.900" />
          </svg>
        </div>
        <div className="mr-[10px] ml-3 w-[65px] text-center leading-[17px] whitespace-nowrap">
          <div>4:57 PM</div>
          <div>06/07/2017</div>
        </div>
        <button type="button" aria-label="Show desktop" className="h-full w-3 border border-r-0 border-[#6a93bd] bg-linear-to-b from-white/35 to-white/5" />
      </div>
    </footer>
  );
}

/* ---------- numbered call-outs ---------- */

function Callouts() {
  return (
    <div className="pointer-events-none absolute inset-0 text-[20px] leading-6 font-bold text-[#dc2127] [font-family:'Liberation_Sans',sans-serif]">
      <div className="absolute top-[127px] left-[19px] flex h-9 w-[384px] justify-end border-[5px] border-[#e81c26] pr-9">
        1
      </div>
      <div className="absolute top-[152px] left-[532px] h-7 w-[107px] border-[5px] border-[#e81c26]" />
      <div className="absolute top-[152px] left-[646px]">3</div>
      <div className="absolute top-[328px] left-[747px] h-9 w-[139px] border-[5px] border-[#e81c26]" />
      <div className="absolute top-[334px] left-[723px]">2</div>
      <svg viewBox="0 0 104 72" className="absolute top-[275px] left-[370px] h-[72px] w-[104px]" aria-hidden="true">
        <path d="M3 18.500h49V3l49 33-49 32V53H3z" fill="none" stroke="#e81c26" strokeWidth="5" strokeLinejoin="round" />
      </svg>
    </div>
  );
}

export default function App() {
  return (
    <div className="relative flex h-screen flex-col overflow-hidden bg-[#1c86d6] text-[11px] leading-4 text-black [font-family:'Noto_Sans','Open_Sans',sans-serif]">
      <main className="relative min-h-0 flex-1 bg-linear-to-br from-[#0569cf] via-[#1b96df] via-25% to-[#3cb6ea] to-50%">
        <Desktop />
        <ServicesWindow />
        <StartMenu />
      </main>
      <Taskbar />
      <Callouts />
    </div>
  );
}
